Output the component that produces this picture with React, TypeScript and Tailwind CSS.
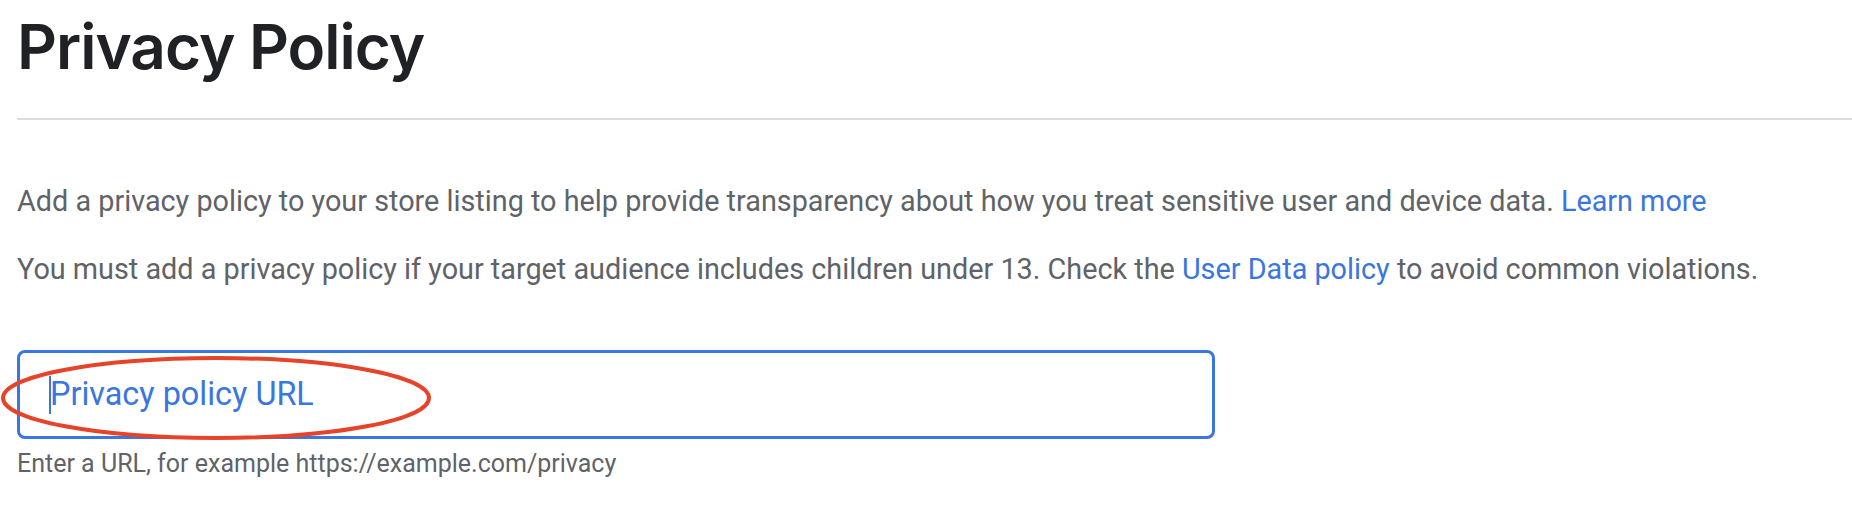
const roboto = { fontFamily: "Roboto, 'Liberation Sans', sans-serif" };

export default function App() {
  return (
    <div className="w-[1852px] h-[506px] bg-white overflow-hidden">
      <div className="pl-[17px]">
        {/* Title */}
        <h1 className="pt-[7px] pb-[31px] text-[62px] leading-[80px] font-semibold tracking-[-1px] text-[#202124] [font-family:Inter,'Open_Sans',sans-serif]">
          Privacy Policy
        </h1>
        <div className="h-[2px] bg-[#dadce0]" />

        {/* Body */}
        <div className="pt-[63px] flex flex-col gap-[31px] text-[28.8px] leading-[37px] text-[#5f6368]" style={roboto}>
          <p>
            Add a privacy policy to your store listing to help provide transparency about how you treat sensitive user and
            device data. <a className="text-[#3a76e0]">Learn more</a>
          </p>
          <p>
            You must add a privacy policy if your target audience includes children under 13. Check the{" "}
            <a className="text-[#3a76e0]">User Data policy</a> to avoid common violations.
          </p>
        </div>

        {/* Field */}
        <div className="relative mt-[62px] w-[1198px]">
          <div className="h-[89px] rounded-[8px] border-[3px] border-[#3a76e0] flex items-center pl-[29px]">
            <span className="w-[2px] h-[38px] bg-[#3a76e0] mr-[-1px]" />
            <span className="text-[32.4px] text-[#3a76e0]" style={roboto}>
              Privacy policy URL
            </span>
          </div>
          <svg className="absolute left-[-16px] top-[5px] pointer-events-none" width="450" height="90" viewBox="0 0 450 90">
            <ellipse cx="215" cy="43" rx="213" ry="40" fill="none" stroke="#e5432a" strokeWidth="4" />
          </svg>
          <p className="pt-[10px] text-[25px] leading-[30px] text-[#5f6368]" style={roboto}>
            Enter a URL, for example https://example.com/privacy
          </p>
        </div>
      </div>
    </div>
  );
}
